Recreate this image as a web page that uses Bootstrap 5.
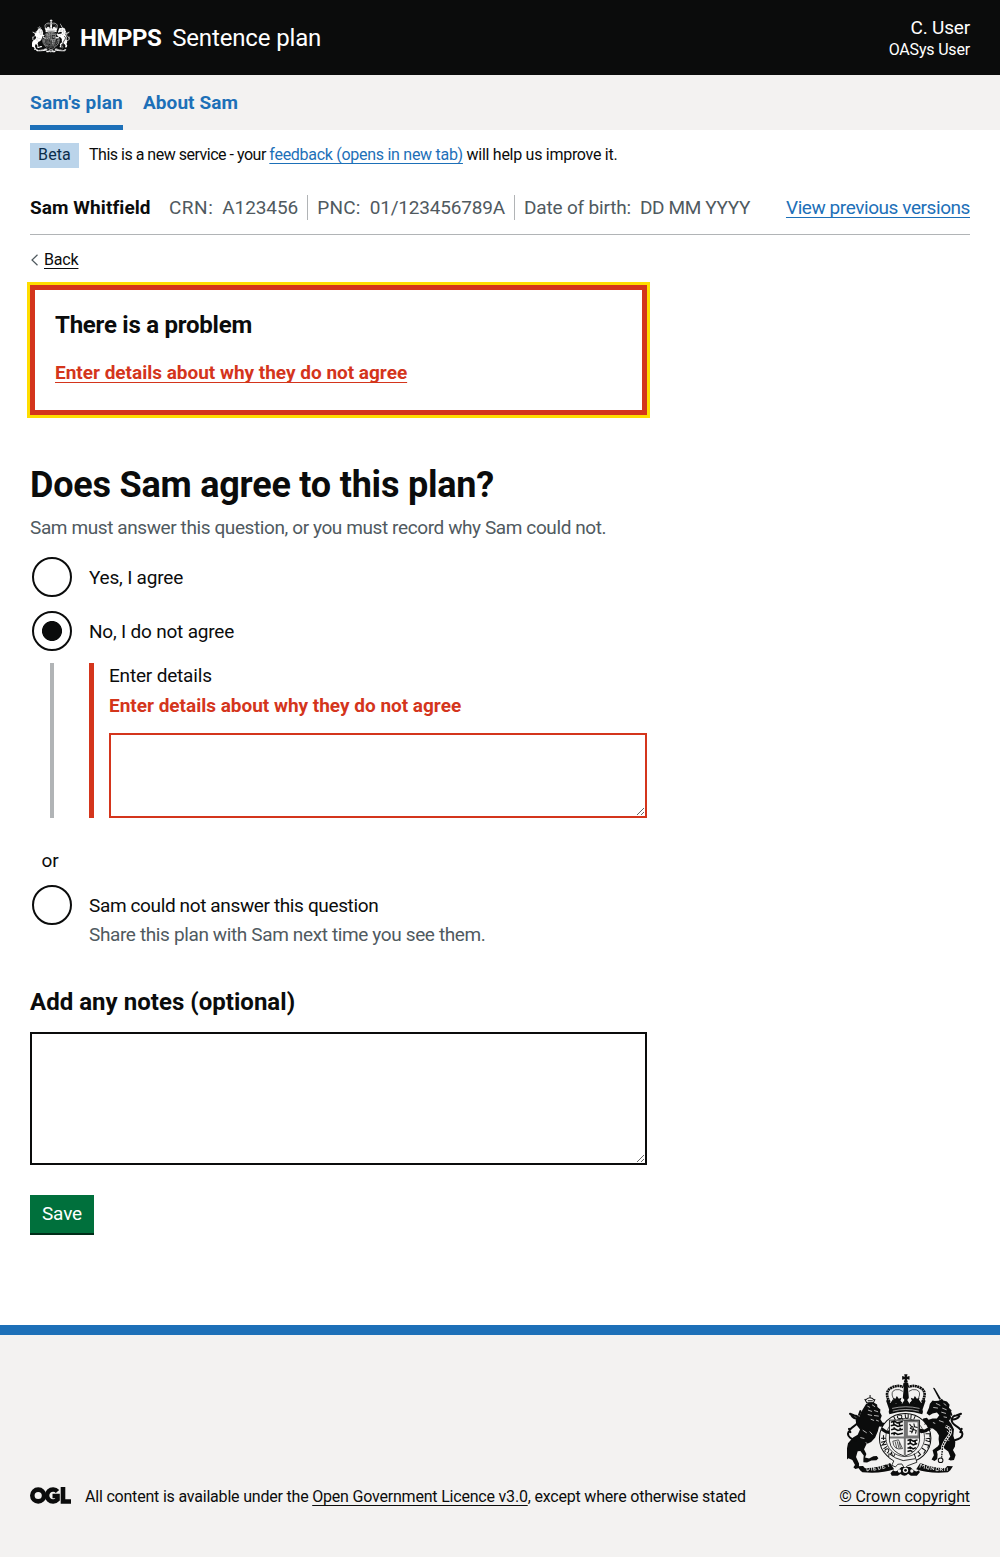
<!DOCTYPE html>
<html lang="en">
<head>
<meta charset="utf-8">
<meta name="viewport" content="width=device-width, initial-scale=1">
<title>Does Sam agree to this plan? - Sentence plan</title>
<link href="https://cdn.jsdelivr.net/npm/bootstrap@5.3.0/dist/css/bootstrap.min.css" rel="stylesheet">
<style>
:root{--ink:#0b0c0c;--paper:#fff;--govblue:#1d70b8;--govred:#d4351c;--secondary:#505a5f;--rule:#b1b4b6;--pale:#f3f2f1}
body{font-family:Roboto,"Noto Sans",sans-serif;font-size:19px;line-height:25px;letter-spacing:-.18px;color:var(--ink);background:var(--paper)}
.gutter{padding-left:30px;padding-right:30px}
.text-16{font-size:16px;line-height:20px}
.text-grey{color:var(--secondary)}
.link-ink,.link-blue{text-decoration:underline;text-decoration-thickness:1px;text-underline-offset:3px;text-decoration-skip-ink:none}
.link-ink{color:var(--ink)}
.link-blue{color:var(--govblue)}
.topbar{height:75px;background:var(--ink);color:#fff;--crest-bg:#0b0c0c}
.topbar .crest{width:38px;height:34px;margin:-5px 10px 0 2px}
.brand{padding-top:2px}
.org{font-size:24px;font-weight:700;letter-spacing:-.5px;margin-right:11px}
.service{font-size:24px;letter-spacing:-.15px}
.primary-nav{height:55px;background:var(--pale);gap:20px}
.primary-nav a{height:55px;padding-top:15px;font-weight:700;text-decoration:none;color:var(--govblue);letter-spacing:.08px}
.primary-nav a.active{border-bottom:5px solid var(--govblue);letter-spacing:.22px}
.phase{padding-top:13px;letter-spacing:-.28px}
.phase>:not(.phase-tag){margin-top:-1px}
.phase-tag{height:25px;width:49px;padding-bottom:1px;background:#bbd4ea;color:#0c2d4a;letter-spacing:.1px;margin-right:10px}
.phase .intro{letter-spacing:-.49px;white-space:pre}
.identity{margin-top:27px;height:40px;border-bottom:1px solid var(--rule);white-space:nowrap}
.identity .who{font-weight:700;letter-spacing:.08px;width:139px}
.identity dl{margin:0;display:flex}
.identity dl>div{display:flex;gap:9px;height:25px}
.identity dt,.identity dd{font-weight:400;margin:0}
.identity .crn{letter-spacing:.5px}
.identity .pnc{letter-spacing:.25px}
.identity .num{letter-spacing:-.08px}
.identity .birth{letter-spacing:-.36px}
.identity dl>div+div{border-left:1px solid var(--rule);padding-left:9px;margin-left:9px}
.identity .versions{letter-spacing:-.43px}
.back{margin-top:15px;height:20px}
.back svg{width:7px;height:12px;margin:0 6px 0 1px}
.column-main{width:617px}
.problem{margin-top:15px;height:130px;border:5px solid var(--govred);outline:3px solid #fd0;padding:20px}
.problem h2{font-size:24px;line-height:30px;font-weight:700;letter-spacing:-.24px;margin:0 0 20px}
.red-text{font-weight:700;color:var(--govred);letter-spacing:-.01px}
h1{font-size:36px;line-height:40px;font-weight:700;letter-spacing:-.22px;margin:50px 0 10px}
.hint-long{height:25px;letter-spacing:-.4px;white-space:nowrap}
.choices{margin-top:15px}
.choice{height:44px;display:flex;align-items:center;letter-spacing:-.2px}
.choice-no{margin-top:10px}
.choice .form-check-input{width:40px;height:40px;margin:0 17px 0 2px;border:2px solid var(--ink);flex:none;box-shadow:none}
.choice .form-check-input:checked{background:radial-gradient(circle,var(--ink) 9.6px,#fff 10.4px)}
.choice-last{letter-spacing:-.37px}
.choice-hint{margin:-5px 0 0 59px;letter-spacing:-.37px;white-space:nowrap}
.conditional{margin:10px 0 30px 20px;height:155px;border-left:4px solid var(--rule);padding-left:35px}
.error-group{border-left:5px solid var(--govred);padding-left:15px;height:155px}
.red-message{margin-top:5px}
.or-divider{width:40px;text-align:center;margin-bottom:10px;height:25px}
textarea.form-control{border:2px solid var(--ink);border-radius:0;padding:5px;resize:vertical;box-shadow:none;min-height:0}
textarea.field-error{border-color:var(--govred);height:85px;margin-top:15px}
textarea.field-notes{height:133px}
.notes-label{font-size:24px;line-height:30px;font-weight:700;letter-spacing:.03px;margin:40px 0 15px}
.save{display:block;margin-top:30px;width:64px;height:38px;background:#00703c;color:#fff;border:0;border-radius:0;box-shadow:0 2px 0 #002d18;font-size:19px;padding:0;letter-spacing:-.15px}
.save:hover{background:#005a30;color:#fff}
.page-foot{margin-top:92px;border-top:10px solid var(--govblue);background:var(--pale);height:232px;padding-top:39px;--crest-bg:#f3f2f1;letter-spacing:-.2px}
.page-foot .crest{width:117px;height:103px;margin-right:6px;margin-bottom:10px}
.page-foot .copyright{letter-spacing:-.1px}
.ogl{width:41px;height:17px;margin:-3px 14px 0 0}
</style>
<script src="https://cdn.jsdelivr.net/npm/bootstrap@5.3.0/dist/js/bootstrap.bundle.min.js"></script>
</head>
<body>
<svg width="0" height="0" class="position-absolute" aria-hidden="true">
<symbol id="royal-arms" viewBox="36 28 350 308">
  <!-- crown -->
  <g fill="currentColor">
    <path d="M207 29h10l-2 7 8-2v11l-8-2 3 9h-12l3-9-8 2V34l8 2z"/>
    <circle cx="212" cy="60" r="8"/>
    <path d="M206 66h12l3 34-9 10-9-10z"/>
    <path d="M157 104l9 11 8-12 9 15 10-10 8 9 11-18 11 18 8-9 10 10 9-15 8 12 9-11 4 4-9 26q3 8-1 14-49-16-98 0-4-6-1-14l-9-26z"/>
    <path d="M185 94l-4 8-8-3 3 9-7 7h14l3 8 4-8h12l-6-7 3-9-8 3zM239 94l-4 8-8-3 3 9-7 7h14l3 8 4-8h12l-6-7 3-9-8 3z"/>
  </g>
  <g fill="none" stroke="currentColor">
    <path d="M163 112q-16-30 4-42 20-11 38-3M261 112q16-30-4-42-20-11-38-3" stroke-width="8" stroke-dasharray="6 1.500"/>
    <path d="M174 100q-9-20 7-25 12-3 22 5M250 100q9-20-7-25-12-3-22 5" stroke-width="2"/>
    <path d="M89 103l6 11h20l5-11M91 106q13-14 27 0M105 98v-7M98 108h15" stroke-width="3"/>
  </g>
  <path d="M171 131q41-10 82 0M173 139q39-10 78 0" fill="none" stroke="var(--crest-bg)" stroke-width="1.800"/>
  <!-- lion -->
  <path d="M93 118l10-5 13 0 10 6 1 8 9 7-1 9 5 10-4 10 6 10 10 2 11 9 9-1 3 7-8 6-12-2-14-8-9-1-4 15-8 19-12 12-14 7-7 15 7 14-4 11 12 3 13-7 10-1 5 7-6 6-15 1-13 6-11-1 0-9 1-11-10-14-8 1-5 17 9 20 0 13-11 3-6-5 5-7-8-15-12-5-6 6-4-8 5-9-6-8 6-6 4-20 15-17 14-8 7-16-11-14-2-14 5-12 6 2 4-12z" fill="currentColor"/>
  <!-- unicorn -->
  <g fill="currentColor">
    <path d="M293 69l5 1 19 32-5 3z"/>
    <path d="M310 108l10-6 4 5 11 3 8 10-2 9 8 8-5 10 4 12-7 9 7 9 8 16-2 20 6 18-1 14-6 10 8 15-5 15-10 2-7-3 6-9-6-15-12-9-5-14-10 0-2-14 1-12-7-11-11-9-13-1-9-5-2-10-8-3 3-11 11-2 5 6 12-4 13 0 7-10-7-8-13 3-10 6-8-7 7-15 3-13 8-10 6 2z"/>
    <path d="M318 228l-10 16-16 12 4 15-7 13 9 4 8-6 1-14-2-8 15-9 11-12z"/>
  </g>
  <!-- tails -->
  <g fill="none" stroke="currentColor" stroke-width="6" stroke-linecap="round">
    <path d="M62 226q-24-6-23-20 4-13 18-22 15-10 15-22-4-10-14-10l-13-5M68 162q-13-1-19-11M72 150l4-11M42 192l4 10"/>
    <path d="M358 226q25-6 23-20-3-13-18-22-15-10-14-20 3-12 14-12l14-5M352 164q13 0 20-10M348 150l-4-10M379 192l-4 10"/>
  </g>
  <g fill="none" stroke="var(--crest-bg)" stroke-width="2.2">
    <path d="M97 124l8 4M111 120l9 6M99 136l12 4M117 137l12 4M98 149l13 3M117 152l14 2M107 163l10 4M123 166l8 3M83 196l12 8M76 218l12 3M104 200l8 9M92 232l8 9"/>
    <path d="M302 116l13 6M294 128l14 2M325 116l8 6M321 130l13 5M318 142l14 4M325 156l10 2M311 167l14 5M335 198l9 10M330 222l12 5M300 176l-7-3"/>
  </g>
  <!-- garter -->
  <ellipse cx="210" cy="220" rx="77" ry="74" fill="var(--crest-bg)" stroke="currentColor" stroke-width="3"/>
  <ellipse cx="210" cy="218" rx="58" ry="57" fill="none" stroke="currentColor" stroke-width="2"/>
  <path d="M142 188l14 10 13-3 7 7-11 6-14-3-14-9zM282 186l-14 8-14-2-5 8 9 5 15-3 14-8z" fill="currentColor"/>
  <g fill="none" stroke="currentColor" stroke-width="3" stroke-linecap="round">
    <path d="M191 151q9-2 9 5t-8 5-4-8M199 160l4 3M210 149l1 9q4 5 8 0v-9M228 150l-1 11M176 156l4 8M240 154l-4 9"/>
    <path d="M139 220h12M145 212v12M139 232l12-3-10 12 12-3M146 251l9-6M150 260q-2-7 5-8t6 5-5 7M163 273l6-10 4 15 6-9M269 178l7-5M272 207h12v8M272 222l12-2v11l-12-4M268 238l12 3-2 8M261 250l10 7-5 8M249 260l7 9-7 5M237 267l4 11"/>
  </g>
  <!-- quartered shield -->
  <path d="M163 166h90v62q-3 33-45 46-42-14-45-46z" fill="var(--crest-bg)" stroke="currentColor" stroke-width="2.500"/>
  <path d="M209 166v105M163 218h89M215 169h35v46h-35z" stroke="currentColor" stroke-opacity=".55" stroke-width="6" fill="none"/>
  <g fill="none" stroke="currentColor" stroke-width="4.600">
    <path d="M167 172l11-3 8 5 17-4M167 183l12-3 9 5 15-4M168 195l11-3 9 5 15-4M168 207l11-3 9 5 15-4M176 171v8M193 173v8M177 187v8M195 189v8M177 203v8"/>
    <path d="M217 227l9-3 8 5 13-4M217 238l9-3 8 5 12-4M217 250l9-3 8 5 8-4M217 260l9-3 6 3M225 226v9M240 227v9M225 244v8"/>
    <path d="M223 178l6 7-3 6 8 3-5 11M236 176l2 10 9 2M234 193l9 4-2 9M232 184l4 12M223 199l7 0" stroke-width="3.200"/>
    <path d="M173 229l17-4 12 26q-26 7-29-22zM180 230l5 20M186 229l6 22M192 232l4 18" stroke-width="2"/>
  </g>
  <!-- chain -->
  <g fill="none" stroke-width="3">
    <path d="M331 184q20 7 13 24-15 19-22 36l-3 34" stroke="var(--crest-bg)" stroke-width="8"/>
    <path d="M331 184q20 7 13 24-15 19-22 36l-3 34" stroke="currentColor" stroke-width="4" stroke-dasharray="5 3"/>
    <circle cx="316" cy="286" r="7" stroke="currentColor"/>
  </g>
  <!-- buckle and strap -->
  <path d="M161 266q20 16 43 21l38-6 3 11-27 10-10 8-8-13-12 1-7 8-11-5 6-13-15-10z" fill="var(--crest-bg)" stroke="currentColor" stroke-width="2.500"/>
  <!-- motto ribbons -->
  <path d="M67 304l17-1 6 7q41-2 75-16l12 19q-38 14-95 9l-7-6zM353 304l-17-1-6 7q-41-2-75-16l-12 19q38 14 95 9l7-6z" fill="currentColor"/>
  <g fill="none" stroke="var(--crest-bg)" stroke-width="2.400">
    <path d="M95 306l1 12q9-2 7-8t-8-4M109 305l1 12M122 303l-7 1 1 12 8-2M116 310h6M127 302l4 12 6-3-2-11M148 297l-7 2 2 12 8-3M142 304h6M153 298l9-4M158 297l3 9"/>
    <path d="M254 308l3-12 5 8 6-5-1 12M276 301l-3 9 7 3 3-9zM287 315l1-10 7 10 1-9M304 306l-2 11q9 2 9-4t-7-7M315 318l1-11q8 0 6 5h-6l7 6M328 308v10M336 308v10"/>
  </g>
  <path d="M174 316q8 7 16-2l9-8h26l10 9q8 8 16 1l3 6-9 10h-18l-8-6q-10 12-23 1l-8 5h-18l-4-7z" fill="currentColor"/>
  <g fill="var(--crest-bg)"><circle cx="193" cy="318" r="5"/><circle cx="211" cy="316" r="8"/><circle cx="230" cy="318" r="5"/></g>
  <circle cx="211" cy="316" r="4" fill="currentColor"/>
</symbol>
</svg>

<header class="topbar gutter d-flex justify-content-between align-items-center">
  <div class="brand d-flex align-items-center">
    <svg class="crest"><use href="#royal-arms"/></svg>
    <span class="org">HMPPS</span><span class="service">Sentence plan</span>
  </div>
  <div class="text-end">
    <div>C. User</div>
    <div class="text-16">OASys User</div>
  </div>
</header>
<nav class="primary-nav gutter d-flex">
  <a class="active" href="#">Sam's plan</a>
  <a href="#">About Sam</a>
</nav>

<div class="gutter">
  <div class="phase text-16 d-flex align-items-center">
    <span class="phase-tag d-flex align-items-center justify-content-center">Beta</span>
    <span class="intro">This is a new service - your </span><a class="link-blue" href="#">feedback (opens in new tab)</a><span>&nbsp;will help us improve it.</span>
  </div>

  <div class="identity d-flex">
    <span class="who">Sam Whitfield</span>
    <dl class="text-grey">
      <div><dt class="crn">CRN:</dt><dd class="num">A123456</dd></div>
      <div><dt class="pnc">PNC:</dt><dd>01/123456789A</dd></div>
      <div><dt>Date of birth:</dt><dd class="birth">DD MM YYYY</dd></div>
    </dl>
    <a class="link-blue versions ms-auto" href="#">View previous versions</a>
  </div>

  <div class="back text-16 d-flex align-items-center">
    <svg viewBox="0 0 7 12" fill="none" stroke="#505a5f" stroke-width="1.200"><path d="M6.500.7 1 6l5.500 5.300"/></svg>
    <a class="link-ink" href="#">Back</a>
  </div>

  <main class="column-main">
    <div class="problem" role="alert">
      <h2>There is a problem</h2>
      <a class="link-blue red-text" href="#">Enter details about why they do not agree</a>
    </div>

    <h1>Does Sam agree to this plan?</h1>
    <div class="hint-long text-grey">Sam must answer this question, or you must record why Sam could not.</div>

    <div class="choices">
      <div class="choice"><input class="form-check-input" type="radio" name="agree" id="yes"><label for="yes">Yes, I agree</label></div>
      <div class="choice choice-no"><input class="form-check-input" type="radio" name="agree" id="no" checked><label for="no">No, I do not agree</label></div>
      <div class="conditional">
        <div class="error-group">
          <label for="details" class="d-block">Enter details</label>
          <div class="red-text red-message">Enter details about why they do not agree</div>
          <textarea class="form-control field-error" id="details"></textarea>
        </div>
      </div>
      <div class="or-divider">or</div>
      <div class="choice choice-last"><input class="form-check-input" type="radio" name="agree" id="cannot"><label for="cannot">Sam could not answer this question</label></div>
      <div class="choice-hint text-grey">Share this plan with Sam next time you see them.</div>
    </div>

    <label for="notes" class="notes-label d-block">Add any notes (optional)</label>
    <textarea class="form-control field-notes" id="notes"></textarea>
    <button class="btn save" type="button">Save</button>
  </main>
</div>

<footer class="page-foot gutter text-16">
  <div class="d-flex justify-content-between align-items-end">
    <div class="d-flex align-items-center">
      <svg class="ogl" viewBox="0 0 41 17" fill="none" stroke="#0b0c0c" stroke-width="4.600"><circle cx="8.200" cy="8.500" r="5.900"/><path d="M27.500 4.500A6 6 0 1 0 27.500 12.500V9H22.500M33 0V14.500H41"/></svg>
      <span>All content is available under the <a class="link-ink" href="#">Open Government Licence v3.0</a>, except where otherwise stated</span>
    </div>
    <div class="d-flex flex-column align-items-end">
      <svg class="crest"><use href="#royal-arms"/></svg>
      <a class="link-ink copyright" href="#">© Crown copyright</a>
    </div>
  </div>
</footer>
</body>
</html>
